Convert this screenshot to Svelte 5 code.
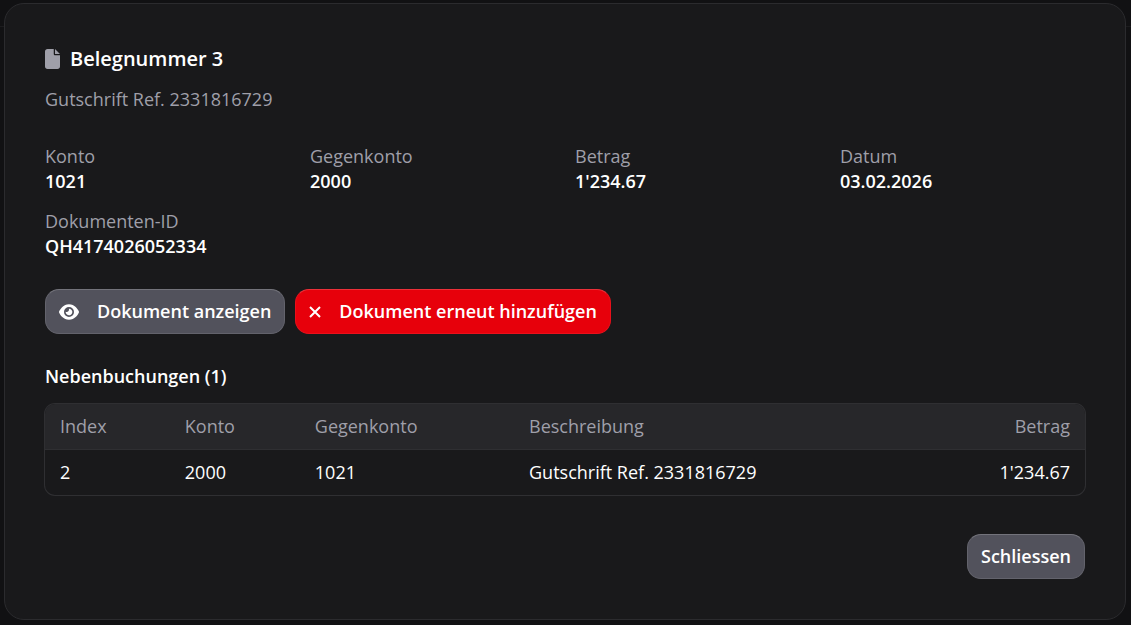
<script lang="ts">
  type Entry = {
    index: number
    account: string
    contra: string
    description: string
    amount: string
  }

  const fields = [
    { label: 'Konto', value: '1021' },
    { label: 'Gegenkonto', value: '2000' },
    { label: 'Betrag', value: "1'234.67" },
    { label: 'Datum', value: '03.02.2026' },
    { label: 'Dokumenten-ID', value: 'QH4174026052334' },
  ]

  const entries: Entry[] = [
    { index: 2, account: '2000', contra: '1021', description: 'Gutschrift Ref. 2331816729', amount: "1'234.67" },
  ]

  let open = $state(true)
</script>

<div class="backdrop">
  {#if open}
    <div class="dialog" role="dialog" aria-modal="true" aria-labelledby="dialog-title">
      <header>
        <h2 id="dialog-title">
          <svg class="file-icon" viewBox="0 0 384 512" aria-hidden="true">
            <path d="M64 0H224V128c0 17.700 14.300 32 32 32H384V448c0 35.300-28.700 64-64 64H64c-35.300 0-64-28.700-64-64V64C0 28.700 28.700 0 64 0zM256 0L384 128H256V0z" />
          </svg>
          Belegnummer 3
        </h2>
        <p>Gutschrift Ref. 2331816729</p>
      </header>

      <dl class="fields">
        {#each fields as field}
          <div>
            <dt>{field.label}</dt>
            <dd>{field.value}</dd>
          </div>
        {/each}
      </dl>

      <div class="actions">
        <button type="button" class="btn">
          <svg class="eye-icon" viewBox="0 0 576 512" aria-hidden="true">
            <path d="M288 32c-80.800 0-145.500 36.800-192.600 80.600C48.600 156 17.300 208 2.500 243.700c-3.300 7.900-3.300 16.700 0 24.600C17.300 304 48.600 356 95.400 399.400C142.500 443.200 207.200 480 288 480s145.500-36.800 192.600-80.600c46.800-43.500 78.100-95.400 93-131.100c3.300-7.900 3.300-16.700 0-24.600c-14.900-35.700-46.200-87.700-93-131.100C433.500 68.800 368.800 32 288 32zM144 256a144 144 0 1 1 288 0 144 144 0 1 1 -288 0zm144-64c0 35.300-28.700 64-64 64c-7.100 0-13.900-1.200-20.300-3.300c-5.500-1.800-11.900 1.600-11.700 7.400c.3 6.900 1.300 13.800 3.200 20.700c13.700 51.200 66.400 81.600 117.600 67.900s81.600-66.400 67.900-117.600c-11.100-41.500-47.800-69.400-88.600-71.100c-5.800-.2-9.200 6.100-7.400 11.700c2.100 6.400 3.300 13.200 3.300 20.300z" />
          </svg>
          Dokument anzeigen
        </button>
        <button type="button" class="btn danger">
          <svg class="x-icon" viewBox="0 0 12 12" aria-hidden="true">
            <path d="M1 1l10 10M11 1L1 11" />
          </svg>
          Dokument erneut hinzufügen
        </button>
      </div>

      <h3>Nebenbuchungen ({entries.length})</h3>

      <div class="table-wrap">
        <table>
          <thead>
            <tr>
              <th class="col-index">Index</th>
              <th class="col-account">Konto</th>
              <th class="col-contra">Gegenkonto</th>
              <th>Beschreibung</th>
              <th class="amount">Betrag</th>
            </tr>
          </thead>
          <tbody>
            {#each entries as entry}
              <tr>
                <td>{entry.index}</td>
                <td>{entry.account}</td>
                <td>{entry.contra}</td>
                <td>{entry.description}</td>
                <td class="amount">{entry.amount}</td>
              </tr>
            {/each}
          </tbody>
        </table>
      </div>

      <footer>
        <button type="button" class="btn" onclick={() => (open = false)}>Schliessen</button>
      </footer>
    </div>
  {/if}
</div>

<style>
  :global(body) {
    background: #111113;
  }

  .backdrop {
    box-sizing: border-box;
    min-height: 100vh;
    padding: 3px 5px 4px 4px;
    background: linear-gradient(#1c1c1e, #1c1c1e) 0 26px / 100% 1px no-repeat;
    font-family: 'Open Sans', sans-serif;
    font-size: 18px;
    line-height: 25px;
    color: #fff;
  }

  .dialog {
    padding: 40px;
    background: #19191b;
    border: 1px solid #2b2b2e;
    border-radius: 20px;
  }

  h2 {
    display: flex;
    align-items: center;
    gap: 10px;
    margin: 0;
    font-size: 20px;
    line-height: 30px;
    font-weight: 600;
  }

  .file-icon {
    width: 15px;
    height: 20px;
    fill: #9f9fa9;
  }

  header p {
    margin: 13px 0 0;
    color: #9f9fa9;
  }

  .fields {
    display: grid;
    grid-template-columns: repeat(4, minmax(0, 1fr));
    gap: 15px 20px;
    margin: 32px 0 30px;
  }

  dt {
    color: #9f9fa9;
  }

  dd {
    margin: 0;
    font-weight: 600;
  }

  .actions {
    display: flex;
    flex-wrap: wrap;
    gap: 10px;
  }

  .btn {
    display: inline-flex;
    align-items: center;
    gap: 18px;
    padding: 9px 13px;
    font: inherit;
    font-weight: 600;
    color: #fff;
    background: #52525c;
    border: 1px solid #63636c;
    border-top-color: #73737b;
    border-radius: 14px;
    cursor: pointer;
  }

  .btn.danger {
    background: #e7000b;
    border-color: #e9101b;
    border-top-color: #ec3039;
  }

  .eye-icon {
    width: 20px;
    height: 18px;
    fill: currentColor;
  }

  .x-icon {
    width: 12px;
    height: 12px;
    fill: none;
    stroke: currentColor;
    stroke-width: 2;
  }

  h3 {
    margin: 30px 0 15px;
    font-size: 18px;
    font-weight: 600;
  }

  .table-wrap {
    overflow: hidden;
    border-radius: 10px;
    box-shadow: 0 0 0 1px #2f2f32;
  }

  table {
    width: 100%;
    border-collapse: collapse;
  }

  thead {
    background: #27272a;
  }

  th,
  td {
    padding: 10px 15px;
    text-align: left;
    font-weight: 400;
  }

  th {
    color: #9f9fa9;
    font-weight: 500;
    border-bottom: 1px solid #2f2f32;
  }

  .col-index {
    width: 12%;
  }

  .col-account {
    width: 12.5%;
  }

  .col-contra {
    width: 20.6%;
  }

  .amount {
    text-align: right;
  }

  footer {
    display: flex;
    justify-content: flex-end;
    margin-top: 39px;
  }
</style>
